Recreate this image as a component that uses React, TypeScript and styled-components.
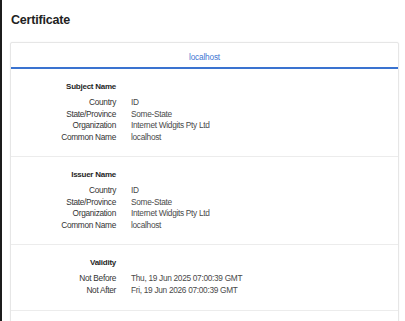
import React from 'react';
import styled, { createGlobalStyle } from 'styled-components';

const GlobalStyle = createGlobalStyle`
    html, body {
        margin: 0;
        padding: 0;
        background: #ffffff;
    }
    body {
        font-family: "Liberation Sans", Arial, sans-serif;
        -webkit-font-smoothing: antialiased;
    }
`;

type Row = { label: string; value: string };
type Section = { title: string; rows: Row[] };

const sections: Section[] = [
    {
        title: 'Subject Name',
        rows: [
            { label: 'Country', value: 'ID' },
            { label: 'State/Province', value: 'Some-State' },
            { label: 'Organization', value: 'Internet Widgits Pty Ltd' },
            { label: 'Common Name', value: 'localhost' },
        ],
    },
    {
        title: 'Issuer Name',
        rows: [
            { label: 'Country', value: 'ID' },
            { label: 'State/Province', value: 'Some-State' },
            { label: 'Organization', value: 'Internet Widgits Pty Ltd' },
            { label: 'Common Name', value: 'localhost' },
        ],
    },
    {
        title: 'Validity',
        rows: [
            { label: 'Not Before', value: 'Thu, 19 Jun 2025 07:00:39 GMT' },
            { label: 'Not After', value: 'Fri, 19 Jun 2026 07:00:39 GMT' },
        ],
    },
];

const App: React.FC = () => {
    return (
        <>
            <GlobalStyle />
            <Page>
                <Title>Certificate</Title>
                <Card>
                    <TabBar>
                        <Tab>localhost</Tab>
                    </TabBar>
                    {sections.map((s) => (
                        <Block key={s.title}>
                            <Heading>{s.title}</Heading>
                            <Rows>
                                {s.rows.map((r) => (
                                    <React.Fragment key={r.label}>
                                        <Label>{r.label}</Label>
                                        <Value>{r.value}</Value>
                                    </React.Fragment>
                                ))}
                            </Rows>
                        </Block>
                    ))}
                    <Block />
                </Card>
            </Page>
        </>
    );
};

const Page = styled.div`
    height: 321px;
    overflow: hidden;
    box-sizing: border-box;
    border-left: 2px solid #1c1c1c;
    padding: 13px 6px 0 8px;
`;

const Title = styled.h1`
    margin: 0 0 14px 1px;
    font-size: 12.5px;
    line-height: 15px;
    font-weight: 700;
    color: #222;
    letter-spacing: -0.2px;
`;

const Card = styled.div`
    border: 1px solid #e6e6e6;
    border-radius: 2px;
    box-shadow: 0 0 2px rgba(0, 0, 0, 0.05);
    background: #fff;
`;

const TabBar = styled.div`
    display: flex;
    justify-content: center;
    align-items: center;
    height: 24px;
    border-bottom: 2px solid #3a73d0;
`;

const Tab = styled.div`
    font-size: 8.3px;
    letter-spacing: -0.2px;
    color: #3f78d3;
    padding-top: 3px;
`;

const Block = styled.div`
    padding: 12px 0 13px;
    min-height: 40px;
    border-bottom: 1px solid #ececec;
    &:last-child {
        border-bottom: none;
    }
`;

const Heading = styled.div`
    width: 105px;
    text-align: right;
    font-size: 8px;
    line-height: 11px;
    font-weight: 700;
    letter-spacing: -0.25px;
    color: #1f1f1f;
    margin-bottom: 5px;
`;

const Rows = styled.div`
    display: grid;
    grid-template-columns: 105px 1fr;
    column-gap: 15px;
    font-size: 8.3px;
    line-height: 11.5px;
    letter-spacing: -0.3px;
`;

const Label = styled.div`
    text-align: right;
    color: #333;
`;

const Value = styled.div`
    color: #4a4a4a;
`;

export default App;
